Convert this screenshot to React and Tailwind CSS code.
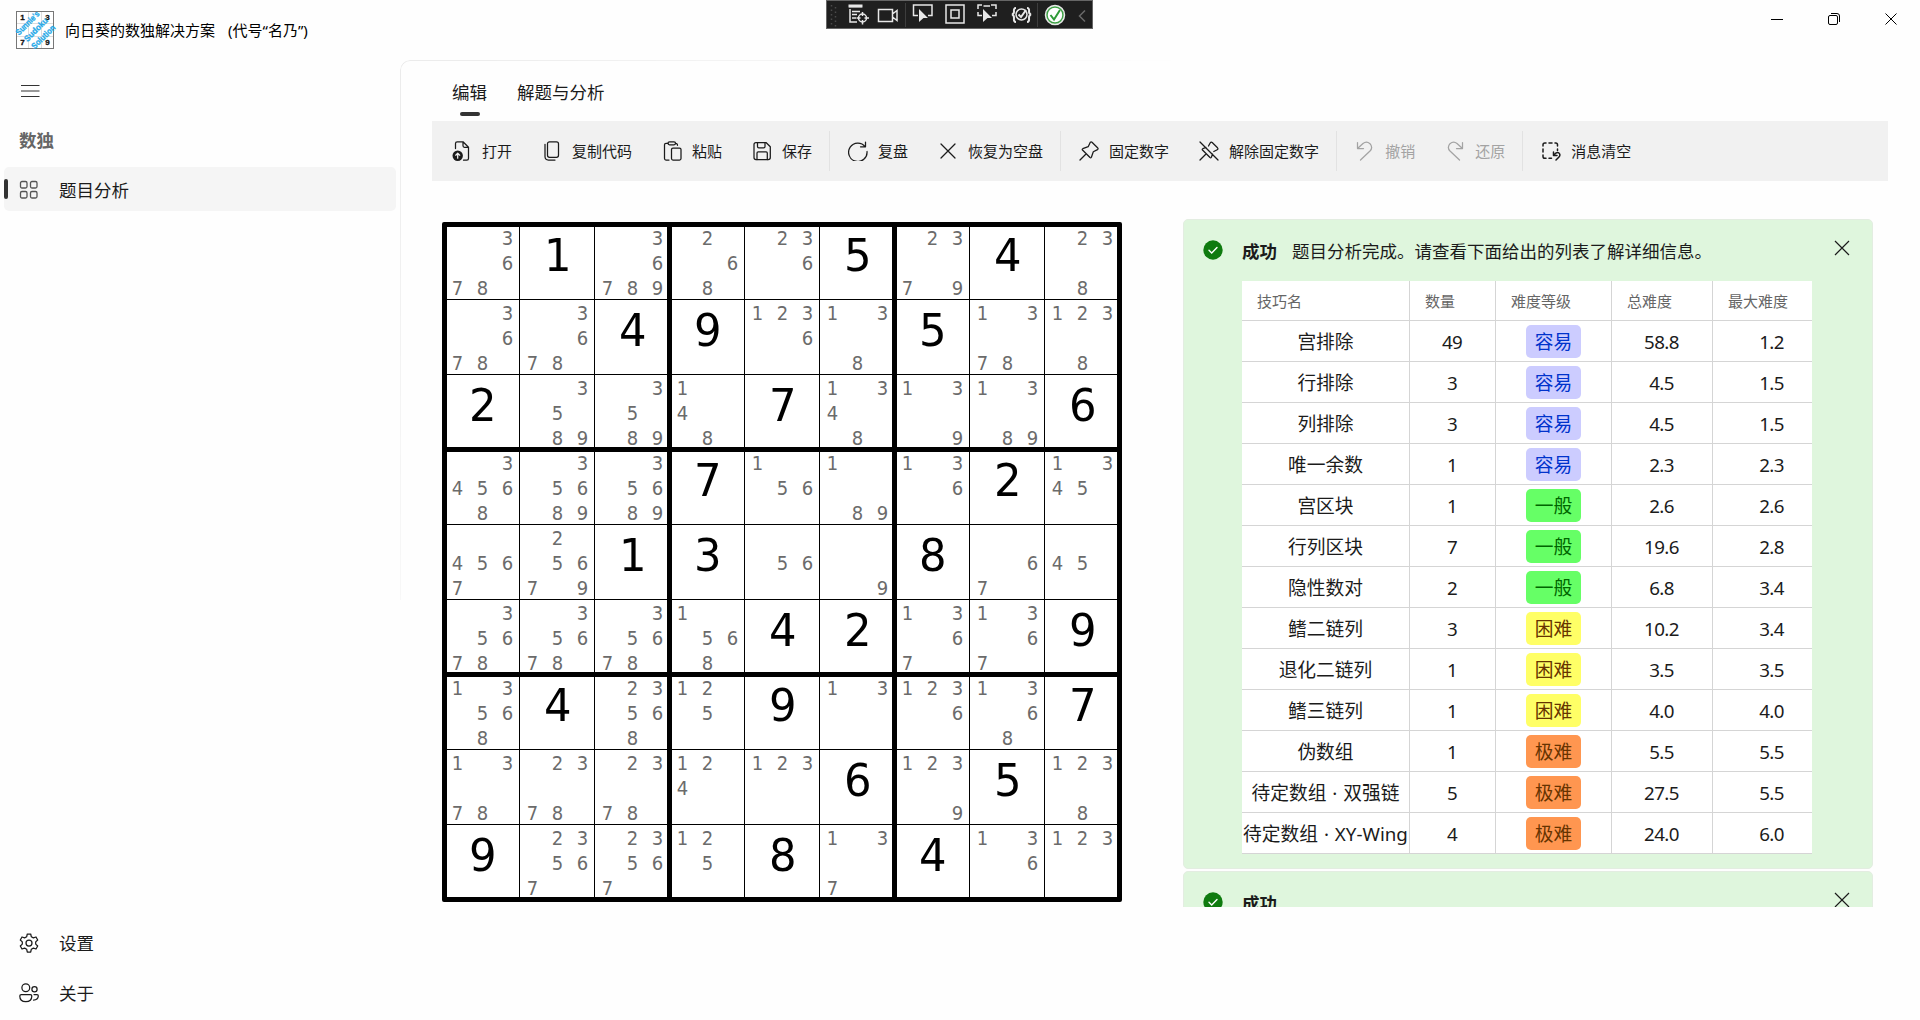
import React from "react";

const BOARD = [
  "3678 =1 36789 268 236 =5 2379 =4 238",
  "3678 3678 =4 =9 1236 138 =5 1378 1238",
  "=2 3589 3589 148 =7 1348 139 1389 =6",
  "34568 35689 35689 =7 156 189 136 =2 1345",
  "4567 25679 =1 =3 56 9 =8 67 45",
  "35678 35678 35678 1568 =4 =2 1367 1367 =9",
  "13568 =4 23568 125 =9 13 1236 1368 =7",
  "1378 2378 2378 124 123 =6 1239 =5 1238",
  "=9 23567 23567 125 =8 137 =4 136 123",
].map((r) => r.split(" "));

const LEVELS = {
  容易: "bg-[#ccccff] text-[#0033cc]",
  一般: "bg-[#66ff66] text-[#006600]",
  困难: "bg-[#ffff66] text-[#663300]",
  极难: "bg-[#ff9650] text-[#663300]",
};

const TECHNIQUES = [
  ["宫排除", "49", "容易", "58.8", "1.2"],
  ["行排除", "3", "容易", "4.5", "1.5"],
  ["列排除", "3", "容易", "4.5", "1.5"],
  ["唯一余数", "1", "容易", "2.3", "2.3"],
  ["宫区块", "1", "一般", "2.6", "2.6"],
  ["行列区块", "7", "一般", "19.6", "2.8"],
  ["隐性数对", "2", "一般", "6.8", "3.4"],
  ["鳍二链列", "3", "困难", "10.2", "3.4"],
  ["退化二链列", "1", "困难", "3.5", "3.5"],
  ["鳍三链列", "1", "困难", "4.0", "4.0"],
  ["伪数组", "1", "极难", "5.5", "5.5"],
  ["待定数组 · 双强链", "5", "极难", "27.5", "5.5"],
  ["待定数组 · XY-Wing", "4", "极难", "24.0", "6.0"],
];

function Icon({ children, className = "size-5", width = 1.25 }) {
  return (
    <svg
      viewBox="0 0 20 20"
      className={`shrink-0 ${className}`}
      fill="none"
      stroke="currentColor"
      strokeWidth={width}
      strokeLinecap="round"
      strokeLinejoin="round"
    >
      {children}
    </svg>
  );
}

const OpenIcon = () => (
  <Icon>
    <path d="M3.500 7.500V2.500Q3.500 .8 5.200 .8H11l5.500 5.500V17.500Q16.500 19.200 14.800 19.200H11.500M11 .8V4.800Q11 6.300 12.500 6.300H16.500" />
    <circle cx="5.700" cy="14.700" r="5.200" fill="currentColor" stroke="none" />
    <path d="M5.700 17.200V12.200M3.700 14.200l2-2 2 2" stroke="#f1f1f1" />
  </Icon>
);
const CopyIcon = () => (
  <Icon>
    <rect x="5.500" y=".8" width="11" height="15.500" rx="2" />
    <path d="M3 3.300V15.500Q3 19 6.500 19H13" />
  </Icon>
);
const PasteIcon = () => (
  <Icon>
    <path d="M6 2.300H4Q2.500 2.300 2.500 3.800V17.500Q2.500 19 4 19H7M13.500 2.300Q15.500 2.300 15.500 4.300" />
    <rect x="6" y=".8" width="7.500" height="3" rx="1.500" />
    <rect x="9.500" y="7" width="9.500" height="12" rx="1.500" />
  </Icon>
);
const SaveIcon = () => (
  <Icon>
    <path d="M2 3.500Q2 1.500 4 1.500H14L18.300 5.800V16.500Q18.300 18.500 16.300 18.500H4Q2 18.500 2 16.500Z" />
    <path d="M5.500 1.500V5.500Q5.500 6.800 6.800 6.800H11.700Q13 6.800 13 5.500V1.500M5 18.500V12Q5 10.800 6.200 10.800H14.100Q15.300 10.800 15.300 12V18.500" />
  </Icon>
);
const RefreshIcon = () => (
  <Icon>
    <path d="M17.500 1V5.800H12.500M17.200 5.800A9.200 9.200 0 1 0 19 10.500" />
  </Icon>
);
const CrossIcon = () => (
  <Icon>
    <path d="M3 3L17 17M17 3L3 17" />
  </Icon>
);
const PinIcon = () => (
  <Icon>
    <path d="M11.300 1.200Q12.200 .4 13 1.200L18.800 7Q19.500 8 18.500 8.600L14.300 10.800L12.400 16.200Q11.900 17.200 11 16.500L3.500 9Q2.800 8.200 3.800 7.700L9.200 5.700ZM7 13L1 19" />
  </Icon>
);
const UnpinIcon = () => (
  <Icon>
    <path d="M9.500 5L11.300 1.800Q12.200 .6 13.200 1.500L18.500 6.800Q19.500 8 18.200 8.700L14.800 10.500M7 6.500L3.800 7.700Q2.800 8.200 3.500 9L11 16.500Q11.900 17.200 12.400 16.200L13.500 13M7 13L1 19M1 1L19 19" />
  </Icon>
);
const UndoIcon = () => (
  <Icon>
    <path d="M2.500 1.500V7.500H8.500M2.800 7.300L8 2.500Q11.500 -.3 15 2.700Q18.300 6.500 15 10L5.500 19" />
  </Icon>
);
const RedoIcon = () => (
  <Icon>
    <path d="M17.500 1.500V7.500H11.500M17.200 7.300L12 2.500Q8.500 -.3 5 2.700Q1.700 6.500 5 10L14.500 19" />
  </Icon>
);
const ClearIcon = () => (
  <Icon width={1.500}>
    <path d="M2 5V3.800Q2 2 3.800 2H5M8 2H11M14 2H14.800Q16.500 2 16.500 3.800V5M16.500 8V9.500M2 8V11M2 14V15.500Q2 17.300 3.800 17.300H5M8 17.300H10.500" />
    <path d="M12.500 11V14.500H16M12.800 14L15 12Q17.500 10.800 18.700 13Q19.300 14.700 18 16L15 19" />
  </Icon>
);

function Tool({ icon: I, label, disabled }) {
  return (
    <button className={`flex h-10 items-center gap-2.5 px-[15px] text-[15px] ${disabled ? "text-[#a3a3a3]" : "text-[#1b1b1b]"}`}>
      <I />
      <span className="whitespace-nowrap">{label}</span>
    </button>
  );
}

const Divider = () => <div className="mr-[3px] ml-[2px] h-10 w-px bg-[#e2e2e2]" />;

function Cell({ value, first }) {
  return (
    <div className="overflow-visible bg-white">
      {value[0] === "=" ? (
        <div className={`flex size-[75px] justify-center text-[45px] leading-none text-black ${first.x ? "-ml-0.5" : ""} ${first.y ? "pt-[6px]" : "pt-[8px]"}`}>
          <span className="scale-x-107">{value[1]}</span>
        </div>
      ) : (
        <div className={`grid size-[75px] grid-cols-3 grid-rows-3 text-[20px] leading-[25px] text-[#6b6b6b] ${first.x ? "-ml-0.5" : ""} ${first.y ? "-mt-px" : "mt-px"}`}>
          {[..."123456789"].map((d) => (
            <span key={d} className="text-center">
              {value.includes(d) ? d : ""}
            </span>
          ))}
        </div>
      )}
    </div>
  );
}

function Board() {
  return (
    <div className="grid size-[680px] shrink-0 grid-cols-3 gap-[5px] rounded-[2px] border-[5px] border-black bg-black font-['DejaVu_Sans_Condensed','DejaVu_Sans',sans-serif] [font-stretch:condensed]">
      {[0, 1, 2, 3, 4, 5, 6, 7, 8].map((b) => (
        <div key={b} className="grid h-[220px] grid-cols-[72px_74px_72px] grid-rows-[72px_74px_72px] gap-px">
          {[0, 1, 2, 3, 4, 5, 6, 7, 8].map((c) => {
            const r = Math.floor(b / 3) * 3 + Math.floor(c / 3);
            const k = (b % 3) * 3 + (c % 3);
            return <Cell key={c} value={BOARD[r][k]} first={{ x: c % 3 === 0, y: c < 3 }} />;
          })}
        </div>
      ))}
    </div>
  );
}

function InfoHeader({ message }) {
  return (
    <div className="flex items-start">
      <svg viewBox="0 0 20 20" className="mt-5 ml-[19px] size-5 shrink-0">
        <circle cx="10" cy="10" r="9.700" fill="#0f7b0f" />
        <path d="M6 10.300l2.700 2.700L14 7.500" fill="none" stroke="#fff" strokeWidth="1.400" strokeLinecap="round" />
      </svg>
      <h2 className="mt-[17px] ml-[19px] text-[17.5px] leading-7 font-bold text-[#1b1b1b]">成功</h2>
      <p className="mt-[17px] ml-[15px] text-[17.5px] leading-7 text-[#1b1b1b]">{message}</p>
      <svg viewBox="0 0 16 16" className="mt-5 mr-[22px] ml-auto size-4" fill="none" stroke="#1b1b1b" strokeWidth="1.200">
        <path d="M1 1L15 15M15 1L1 15" />
      </svg>
    </div>
  );
}

const COLS = "grid grid-cols-[168px_86px_116px_101px_118px] overflow-hidden border-b border-[#d5d5d5]";

function Table() {
  return (
    <div className="mt-4 ml-[58px] w-[570px] overflow-hidden bg-white text-[#1b1b1b]">
      <div className={`${COLS} h-10 text-[15px] leading-[40px] text-[#666]`}>
        {["技巧名", "数量", "难度等级", "总难度", "最大难度"].map((h, i) => (
          <div key={h} className={`pl-[15px] ${i < 4 ? "border-r border-[#d5d5d5]" : ""}`}>
            {h}
          </div>
        ))}
      </div>
      {TECHNIQUES.map((row) => (
        <div key={row[0]} className={`${COLS} h-[41px] text-[18.75px] leading-[42px]`}>
          {row.map((v, i) => (
            <div key={i} className={`flex justify-center whitespace-nowrap ${i < 4 ? "border-r border-[#d5d5d5]" : ""} ${i % 2 || i === 4 ? "pr-px tracking-[-0.6px]" : "[word-spacing:1px]"}`}>
              {i === 2 ? (
                <span className={`mt-1 h-[33px] w-[55px] rounded-[5px] text-center leading-[34px] ${LEVELS[v]}`}>{v}</span>
              ) : (
                v
              )}
            </div>
          ))}
        </div>
      ))}
    </div>
  );
}

function Logo() {
  return (
    <svg viewBox="0 0 38 38" className="size-[38px] overflow-visible font-['Liberation_Sans',sans-serif]">
      <rect x=".5" y=".5" width="37" height="37" fill="#fff" stroke="#777" />
      <path d="M12.500 1V37M25.500 1V37M1 12.500H37M1 25.500H37" stroke="#ddd" />
      <g fontSize="8" fontWeight="bold" fill="#111" stroke="#111" strokeWidth=".3" textAnchor="middle">
        <text x="6.500" y="9">1</text>
        <text x="31.500" y="9">3</text>
        <text x="6.500" y="34">7</text>
        <text x="31.500" y="34">9</text>
      </g>
      <g fontSize="8.500" fontWeight="bold" fill="#25a9e8" stroke="#25a9e8" strokeWidth=".3" textAnchor="middle">
        <text transform="translate(13.600 14.100) rotate(-45)" textLength="30" lengthAdjust="spacingAndGlyphs">Sunnie's</text>
        <text transform="translate(22 20.600) rotate(-45)" textLength="30" lengthAdjust="spacingAndGlyphs">Sudoku</text>
        <text transform="translate(29.400 27.800) rotate(-45)" textLength="30" lengthAdjust="spacingAndGlyphs">Solution</text>
      </g>
    </svg>
  );
}

function DebugBar() {
  return (
    <div className="absolute top-0 left-[826px] h-[29px] w-[267px] border border-[#666] bg-[#1f1f1f]">
      <svg viewBox="827 1 265 27" className="h-[27px] w-[265px]" fill="none" stroke="#e8e8e8" strokeWidth="1.500">
        <path d="M831.500 5V25M835.500 7V27" stroke="#4a4a4a" strokeDasharray="1.500 3" />
        <path d="M849 6.500H862M850 9V22H857M852 11.500H860M852 14.500H857M852 18H856" />
        <path d="M848.500 6H862.500" strokeWidth="3" />
        <circle cx="862.500" cy="18" r="4" />
        <path d="M862.500 12V16M862.500 20V24.500M856.500 18H860.500M864.500 18H869" />
        <path d="M878.500 9.500H892.500V21.500H878.500ZM892.500 14L897 10.500V20.500L892.500 17" />
        <path d="M905.500 3V27M1037.500 3V27" stroke="#3d3d3d" strokeWidth="1" />
        <path d="M918 15.500H913.500V5H932V15.500H928" />
        <path d="M919 9L928 18H923.500L919 22Z" fill="#e8e8e8" stroke="none" />
        <rect x="946" y="5" width="18" height="18" />
        <rect x="951" y="10" width="8" height="8" />
        <path d="M978 9V5H982M991 5H996V9M996 12V15.500H992M982 15.500H978V12M983.500 6H990" />
        <path d="M983 9L992 18H987.500L983 22Z" fill="#e8e8e8" stroke="none" />
        <path d="M1016 8Q1013.500 8 1014 11.500Q1014 14 1012 14.500Q1014 15 1014 18Q1013.500 22 1016 22M1027 8Q1029.500 8 1029 11.500Q1029 14 1031 14.500Q1029 15 1029 18Q1029.500 22 1027 22" strokeWidth="2" />
        <circle cx="1021.500" cy="14.500" r="5.500" />
        <path d="M1018.500 14.500L1021 17L1026 10" strokeWidth="2" />
        <circle cx="1055" cy="15" r="9.500" fill="#fff" stroke="#e8e8e8" />
        <circle cx="1055" cy="15" r="8" stroke="#3fa046" />
        <path d="M1050.500 15L1054 19.500L1060 10" stroke="#2f9a38" strokeWidth="2" />
        <path d="M1085 10.500L1079.500 16L1085 21.500" stroke="#6a6a6a" />
      </svg>
    </div>
  );
}

export default function App() {
  return (
    <div className="relative flex h-[1020px] w-[1920px] flex-col overflow-hidden bg-[#fefefe] font-['Noto_Sans','Noto_Sans_CJK_SC',sans-serif] text-[#1b1b1b]">
      <header className="flex h-[60px] shrink-0 items-center pl-4">
        <Logo />
        <h1 className="ml-[11px] text-[15px] whitespace-pre text-black">
          向日葵的数独解决方案<span className="ml-[13px]">(代号“名乃”)</span>
        </h1>
        <div className="mr-[23px] mb-[22px] ml-auto flex items-center gap-[45px] text-black">
          <svg viewBox="0 0 12 12" className="size-3" stroke="currentColor"><path d="M0 6.500H12" /></svg>
          <svg viewBox="0 0 12 12" className="size-3" fill="none" stroke="currentColor">
            <rect x=".5" y="2.500" width="9" height="9" rx="1.500" />
            <path d="M3 .5H9Q11.500 .5 11.500 3V9" />
          </svg>
          <svg viewBox="0 0 12 12" className="size-3" stroke="currentColor"><path d="M.5 .5L11.500 11.500M11.500 .5L.5 11.500" /></svg>
        </div>
      </header>
      <DebugBar />
      <div className="flex min-h-0 flex-1">
        <nav className="flex w-[400px] shrink-0 flex-col text-[17.5px]">
          <svg viewBox="0 0 20 14" className="mt-6 ml-5 h-[14px] w-5" stroke="#333" strokeWidth="1.200">
            <path d="M1 1.500H19.500M1 7H19.500M1 12.500H19.500" />
          </svg>
          <div className="mt-[28px] ml-[19px] leading-7 font-bold text-[#666]">数独</div>
          <div className="mt-[13px] ml-1 flex h-11 w-[392px] items-center rounded-[5px] bg-[#f5f5f5]">
            <div className="h-5 w-1 rounded-full bg-[#333]" />
            <svg viewBox="0 0 20 20" className="mt-0.5 ml-[11px] size-5" fill="none" stroke="#555" strokeWidth="1.300">
              <rect x="1.500" y="1.500" width="6.500" height="6.500" rx="1.500" />
              <rect x="11.500" y="1.500" width="6.500" height="6.500" rx="1.500" />
              <rect x="1.500" y="11.500" width="6.500" height="6.500" rx="1.500" />
              <rect x="11.500" y="11.500" width="6.500" height="6.500" rx="1.500" />
            </svg>
            <span className="mt-0.5 ml-5">题目分析</span>
          </div>
          <div className="mt-auto mb-0.5 flex h-[100px] flex-col">
            <div className="flex h-[50px] items-center gap-5 pl-[19px]">
              <Icon>
                <path d="M8.300 1H11.700L12.300 3.700L14.400 4.900L17 4L18.700 7L16.700 8.900V11.100L18.700 13L17 16L14.400 15.100L12.300 16.300L11.700 19H8.300L7.700 16.300L5.600 15.100L3 16L1.300 13L3.300 11.100V8.900L1.300 7L3 4L5.600 4.900L7.700 3.700Z" />
                <circle cx="10" cy="10" r="3" />
              </Icon>
              <span>设置</span>
            </div>
            <div className="flex h-[50px] items-center gap-5 pl-[19px]">
              <Icon>
                <circle cx="6.800" cy="4.800" r="3.900" />
                <circle cx="15.500" cy="6.300" r="2.600" />
                <path d="M2.300 11.500H11.300Q12.800 11.500 12.800 13Q12.800 18.700 6.800 18.700Q.8 18.700 .8 13Q.8 11.500 2.300 11.500ZM15 11.500H18Q19.300 11.500 19.300 13Q19 17 14.500 17" />
              </Icon>
              <span>关于</span>
            </div>
          </div>
        </nav>
        <main className="relative flex flex-1 flex-col pr-8 pl-8">
          <div className="absolute inset-x-0 top-0 h-[540px] rounded-tl-[10px] border-t border-l border-[#ebebeb] [mask-image:linear-gradient(135deg,#000_0,transparent_560px)]" />
          <div className="flex h-[61px] gap-[30px] pt-[18px] pl-5 text-[17.5px] leading-7">
            <div className="flex flex-col items-center">
              编辑
              <div className="mt-[6px] h-1 w-5 shrink-0 rounded-full bg-[#333]" />
            </div>
            <div>解题与分析</div>
          </div>
          <div className="flex h-[60px] w-[1456px] items-center bg-[#f1f1f1] pl-[5px]">
            <Tool icon={OpenIcon} label="打开" />
            <Tool icon={CopyIcon} label="复制代码" />
            <Tool icon={PasteIcon} label="粘贴" />
            <Tool icon={SaveIcon} label="保存" />
            <Divider />
            <Tool icon={RefreshIcon} label="复盘" />
            <Tool icon={CrossIcon} label="恢复为空盘" />
            <Divider />
            <Tool icon={PinIcon} label="固定数字" />
            <Tool icon={UnpinIcon} label="解除固定数字" />
            <Divider />
            <Tool icon={UndoIcon} label="撤销" disabled />
            <Tool icon={RedoIcon} label="还原" disabled />
            <Divider />
            <Tool icon={ClearIcon} label="消息清空" />
          </div>
          <div className="flex pl-[10px]">
            <div className="pt-[41px]">
              <Board />
            </div>
            <div className="mt-[38px] ml-[61px] flex h-[688px] w-[690px] flex-col gap-0.5 overflow-hidden">
              <section className="h-[650px] shrink-0 rounded-[5px] border border-[#e3ede1] bg-[#dff6dd]">
                <InfoHeader message="题目分析完成。请查看下面给出的列表了解详细信息。" />
                <Table />
              </section>
              <section className="h-[100px] shrink-0 rounded-[5px] border border-[#e3ede1] bg-[#dff6dd]">
                <InfoHeader message="" />
              </section>
            </div>
          </div>
        </main>
      </div>
    </div>
  );
}
